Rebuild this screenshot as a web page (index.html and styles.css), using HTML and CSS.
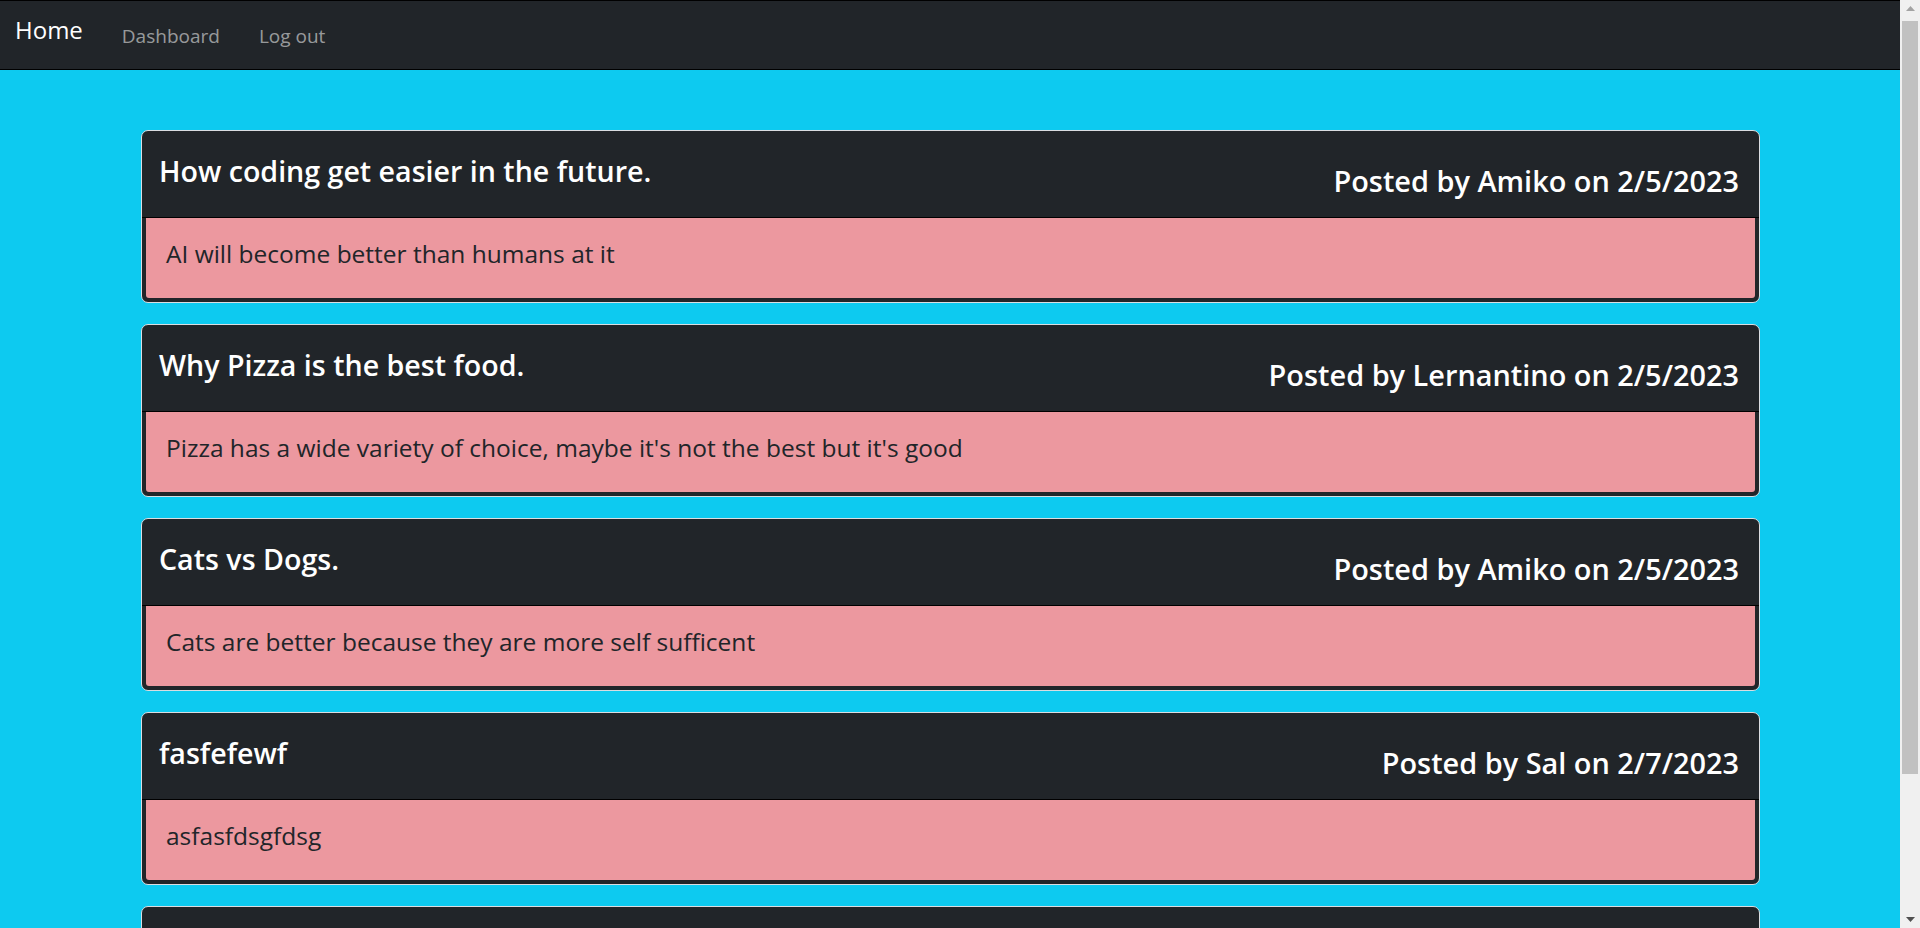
FILE: index.html
```html
<!DOCTYPE html>
<html lang="en">
<head>
<meta charset="utf-8">
<title>Home</title>
<link rel="stylesheet" href="styles.css">
</head>
<body>
<div class="viewport">
  <div class="page">
    <nav class="navbar">
      <a class="brand" href="#">Home</a>
      <a class="nav-link" href="#">Dashboard</a>
      <a class="nav-link" href="#">Log out</a>
    </nav>
    <main class="posts">
      <article class="card">
        <header class="card-header">
          <h2 class="title">How coding get easier in the future.</h2>
          <h3 class="posted">Posted by Amiko on 2/5/2023</h3>
        </header>
        <div class="card-body-wrap"><div class="card-body"><p>AI will become better than humans at it</p></div></div>
      </article>
      <article class="card">
        <header class="card-header">
          <h2 class="title">Why Pizza is the best food.</h2>
          <h3 class="posted">Posted by Lernantino on 2/5/2023</h3>
        </header>
        <div class="card-body-wrap"><div class="card-body"><p>Pizza has a wide variety of choice, maybe it's not the best but it's good</p></div></div>
      </article>
      <article class="card">
        <header class="card-header">
          <h2 class="title">Cats vs Dogs.</h2>
          <h3 class="posted">Posted by Amiko on 2/5/2023</h3>
        </header>
        <div class="card-body-wrap"><div class="card-body"><p>Cats are better because they are more self sufficent</p></div></div>
      </article>
      <article class="card">
        <header class="card-header">
          <h2 class="title">fasfefewf</h2>
          <h3 class="posted">Posted by Sal on 2/7/2023</h3>
        </header>
        <div class="card-body-wrap"><div class="card-body"><p>asfasfdsgfdsg</p></div></div>
      </article>
      <article class="card">
        <header class="card-header"></header>
      </article>
    </main>
  </div>
  <div class="scrollbar" aria-hidden="true">
    <div class="sb-arrow">
      <svg width="9" height="5" viewBox="0 0 9 5"><path d="M0 5 L4.5 0 L9 5 Z" fill="#a3a3a3"/></svg>
    </div>
    <div class="sb-thumb"></div>
    <div class="sb-space"></div>
    <div class="sb-arrow">
      <svg width="9" height="5" viewBox="0 0 9 5"><path d="M0 0 L9 0 L4.5 5 Z" fill="#505050"/></svg>
    </div>
  </div>
</div>
</body>
</html>
```

FILE: styles.css
```css
html, body {
  margin: 0;
  height: 100%;
  overflow: hidden;
}

body {
  font-family: "Open Sans", "Noto Sans", sans-serif;
  background: #0dcaf0;
  color: #212529;
}

.viewport {
  display: flex;
  height: 100vh;
}

.page {
  flex: 1;
  min-width: 0;
  overflow: hidden;
  background: #0dcaf0;
}

/* ---------- navbar ---------- */
.navbar {
  display: flex;
  align-items: flex-start;
  gap: 39px;
  height: 68px;
  padding: 0 0 0 15px;
  background: #212529;
  border-top: 1px solid #000;
  border-bottom: 1px solid #000;
}

.brand {
  padding-top: 14px;
  font-size: 24px;
  line-height: 30px;
  color: #fff;
  text-decoration: none;
}

.nav-link {
  padding-top: 20px;
  font-size: 19px;
  line-height: 30px;
  color: rgba(255, 255, 255, 0.55);
  text-decoration: none;
}

/* ---------- posts ---------- */
.posts {
  display: flex;
  flex-direction: column;
  gap: 21px;
  padding: 60px 140px 0 141px;
}

.card {
  background: #212529;
  border: 1px solid #dadde1;
  border-radius: 7px;
  overflow: hidden;
  flex: none;
}

.card-header {
  display: flex;
  justify-content: space-between;
  align-items: flex-start;
  height: 86px;
  padding: 0 20px 0 17px;
  border-bottom: 1px solid #000;
  color: #fff;
}

.title {
  margin: 0;
  padding-top: 22px;
  font-size: 28.6px;
  line-height: 36px;
  font-weight: 600;
}

.posted {
  margin: 0;
  padding-top: 32px;
  font-size: 28.9px;
  line-height: 36px;
  font-weight: 600;
}

.card-body-wrap {
  padding: 0 4px 4px;
}

.card-body {
  height: 80px;
  box-sizing: border-box;
  padding: 18px 20px 0;
  background: #ec989f;
  border-radius: 0 0 3px 3px;
}

.card-body p {
  margin: 0;
  font-size: 24.5px;
  line-height: 36px;
  color: #212529;
}

/* ---------- scrollbar ---------- */
.scrollbar {
  flex: none;
  width: 20px;
  display: flex;
  flex-direction: column;
  align-items: center;
  background: #f0f0f0;
}

.sb-arrow {
  height: 17px;
  display: flex;
  align-items: center;
  justify-content: center;
}

.sb-thumb {
  margin-top: 4px;
  width: 16px;
  height: 753px;
  background: #c1c1c1;
}

.sb-space {
  flex: 1;
}
```
